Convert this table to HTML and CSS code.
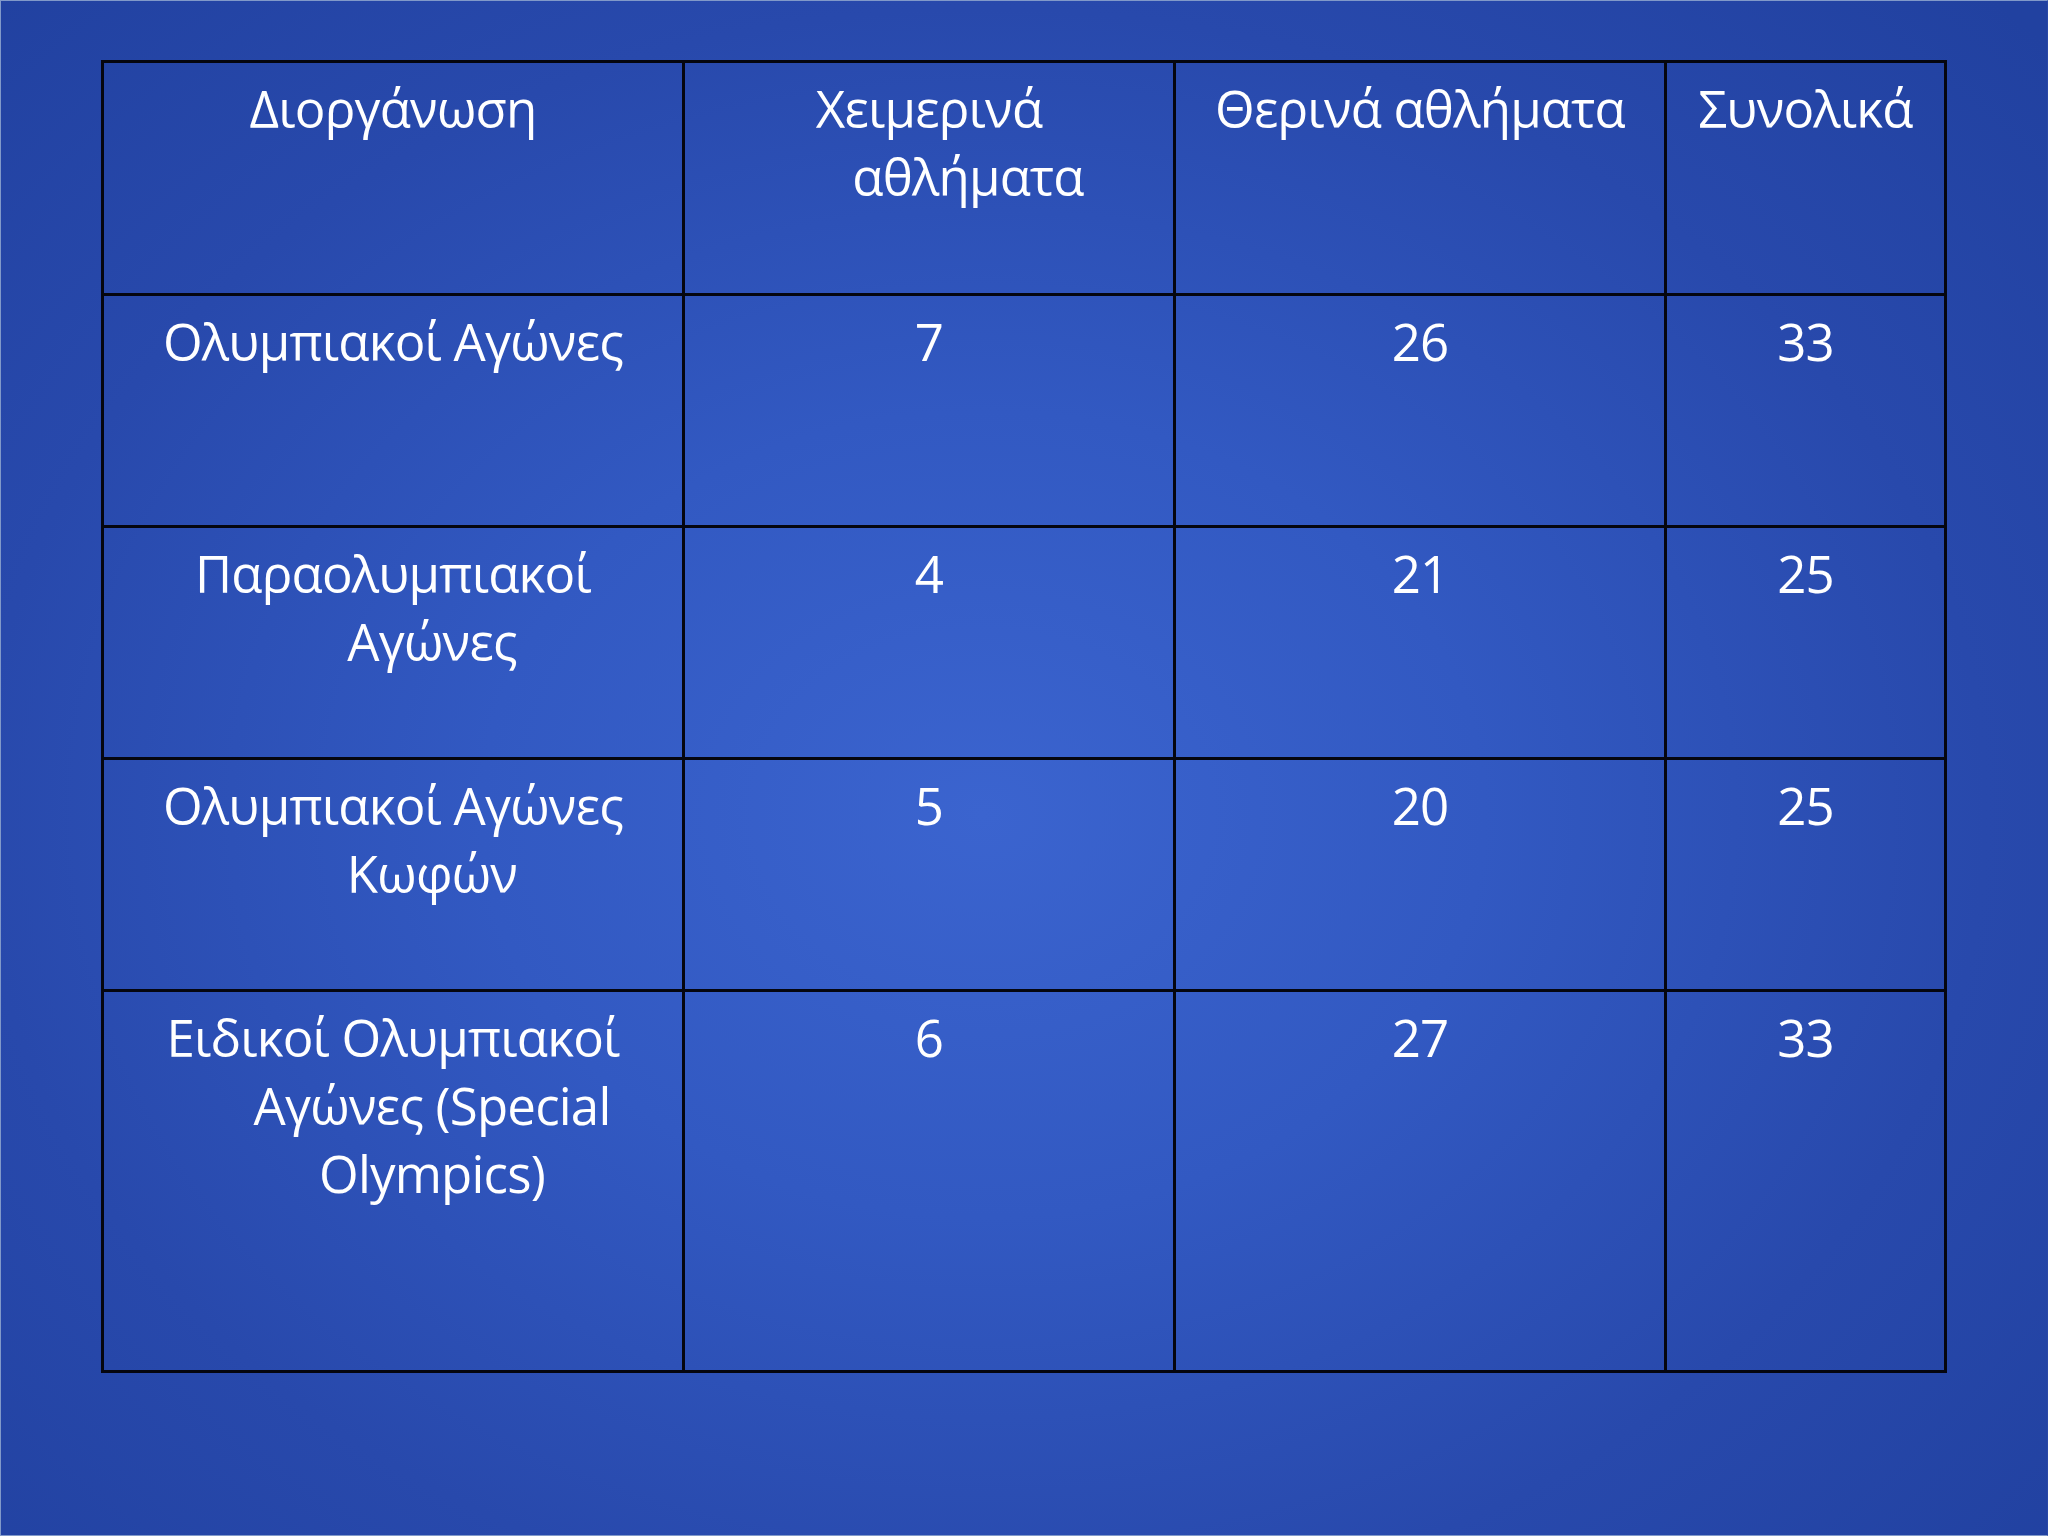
FILE: index.html
```html
<!DOCTYPE html>
<html lang="el">
<head>
<meta charset="utf-8">
<title>Διοργανώσεις</title>
<link rel="stylesheet" href="styles.css">
</head>
<body>
<div class="slide">
  <table class="sports">
    <colgroup>
      <col class="c1"><col class="c2"><col class="c3"><col class="c4">
    </colgroup>
    <tr class="r-head">
      <td class="name">Διοργάνωση</td>
      <td class="name">Χειμερινά<br>αθλήματα</td>
      <td class="name">Θερινά αθλήματα</td>
      <td class="name">Συνολικά</td>
    </tr>
    <tr class="r-mid">
      <td class="name">Ολυμπιακοί Αγώνες</td>
      <td class="num">7</td>
      <td class="num">26</td>
      <td class="num">33</td>
    </tr>
    <tr class="r-mid">
      <td class="name">Παραολυμπιακοί<br>Αγώνες</td>
      <td class="num">4</td>
      <td class="num">21</td>
      <td class="num">25</td>
    </tr>
    <tr class="r-mid">
      <td class="name">Ολυμπιακοί Αγώνες<br>Κωφών</td>
      <td class="num">5</td>
      <td class="num">20</td>
      <td class="num">25</td>
    </tr>
    <tr class="r-last">
      <td class="name">Ειδικοί Ολυμπιακοί<br>Αγώνες (Special<br>Olympics)</td>
      <td class="num">6</td>
      <td class="num">27</td>
      <td class="num">33</td>
    </tr>
  </table>
</div>
</body>
</html>
```
FILE: styles.css
```css
html, body {
  margin: 0;
  padding: 0;
}

body {
  width: 2048px;
  height: 1536px;
  overflow: hidden;
}

.slide {
  box-sizing: border-box;
  width: 2048px;
  height: 1536px;
  border: 1px solid #8199c9;
  border-right-color: #2a48a6;
  padding: 59px 0 0 100px;
  background: radial-gradient(ellipse 70% 75% at 48% 53%, #3b64cf 0%, #3259c2 35%, #2849ac 70%, #2141a0 100%);
  font-family: "Open Sans", "Noto Sans", "DejaVu Sans", sans-serif;
  color: #ffffff;
}

.sports {
  border-collapse: collapse;
  table-layout: fixed;
  width: 1843px;
}

.sports .c1 { width: 581px; }
.sports .c2 { width: 491px; }
.sports .c3 { width: 491px; }
.sports .c4 { width: 280px; }

.sports td {
  border: 3px solid #05060f;
  vertical-align: top;
  text-align: center;
  font-size: 51px;
  line-height: 68px;
  padding: 11px 10px 0 10px;
  letter-spacing: -0.8px;
}

.sports td.name {
  padding-left: 88px;
  text-indent: -78px;
}

.r-head td { height: 219px; }
.r-mid td { height: 218px; }
.r-last td { height: 367px; }
```
